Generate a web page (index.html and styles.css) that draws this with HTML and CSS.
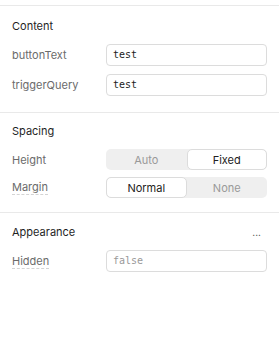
FILE: index.html
```html
<!DOCTYPE html>
<html lang="en">
<head>
    <meta charset="UTF-8">
    <meta name="viewport" content="width=device-width, initial-scale=1.0">
    <title>Inspector</title>
    <link rel="stylesheet" href="styles.css">
</head>
<body>
    <div class="panel">
        <section class="section">
            <div class="section-head">
                <h2>Content</h2>
            </div>
            <div class="row">
                <label class="label">buttonText</label>
                <div class="field">test</div>
            </div>
            <div class="row">
                <label class="label">triggerQuery</label>
                <div class="field">test</div>
            </div>
        </section>

        <section class="section">
            <div class="section-head">
                <h2>Spacing</h2>
            </div>
            <div class="row tight">
                <label class="label">Height</label>
                <div class="segmented">
                    <span class="seg">Auto</span>
                    <span class="seg active">Fixed</span>
                </div>
            </div>
            <div class="row tight">
                <label class="label dotted">Margin</label>
                <div class="segmented">
                    <span class="seg active">Normal</span>
                    <span class="seg">None</span>
                </div>
            </div>
        </section>

        <section class="section">
            <div class="section-head">
                <h2>Appearance</h2>
                <span class="more">...</span>
            </div>
            <div class="row">
                <label class="label dotted">Hidden</label>
                <div class="field placeholder">false</div>
            </div>
        </section>
    </div>
</body>
</html>
```

FILE: styles.css
```css
body {
    margin: 0;
    padding: 0;
    font-family: Inter, "Noto Sans", sans-serif;
    background-color: #ffffff;
    color: #555;
}

.panel {
    padding-top: 5px;
}

.section {
    border-top: 1px solid #e9e9e9;
    padding: 10px 12px 14px;
}

.section:first-child {
    padding-top: 12px;
    padding-bottom: 16px;
}

.section:last-child {
    padding-top: 11px;
}

.section-head {
    display: flex;
    justify-content: space-between;
    align-items: center;
    height: 16px;
    margin-bottom: 10px;
}

h2 {
    margin: 0;
    font-size: 11px;
    font-weight: 400;
    color: #1f1f1f;
}

.more {
    font-size: 10px;
    color: #444;
    padding-right: 6px;
    line-height: 1;
}

.row {
    display: grid;
    grid-template-columns: 94px 1fr;
    align-items: center;
    margin-bottom: 8px;
}

.row.tight {
    margin-bottom: 7px;
}

.row:last-child {
    margin-bottom: 0;
}

.label {
    font-size: 11px;
    color: #6b6b6b;
    justify-self: start;
}

.label.dotted {
    border-bottom: 1px dashed #d4d4d4;
    line-height: 14px;
}

.field {
    height: 22px;
    box-sizing: border-box;
    border: 1px solid #dcdcdc;
    border-radius: 4px;
    padding: 0 6px;
    font-family: "DejaVu Sans Mono", "Liberation Mono", monospace;
    font-size: 10px;
    line-height: 20px;
    color: #222;
}

.field.placeholder {
    color: #999;
}

.segmented {
    display: grid;
    grid-template-columns: 1fr 1fr;
    height: 21px;
    box-sizing: border-box;
    background-color: #efefef;
    border-radius: 5px;
}

.seg {
    display: flex;
    align-items: center;
    justify-content: center;
    font-size: 11px;
    color: #999;
    border-radius: 5px;
    border: 1px solid transparent;
}

.seg.active {
    background-color: #ffffff;
    border-color: #dcdcdc;
    color: #222;
}
```
